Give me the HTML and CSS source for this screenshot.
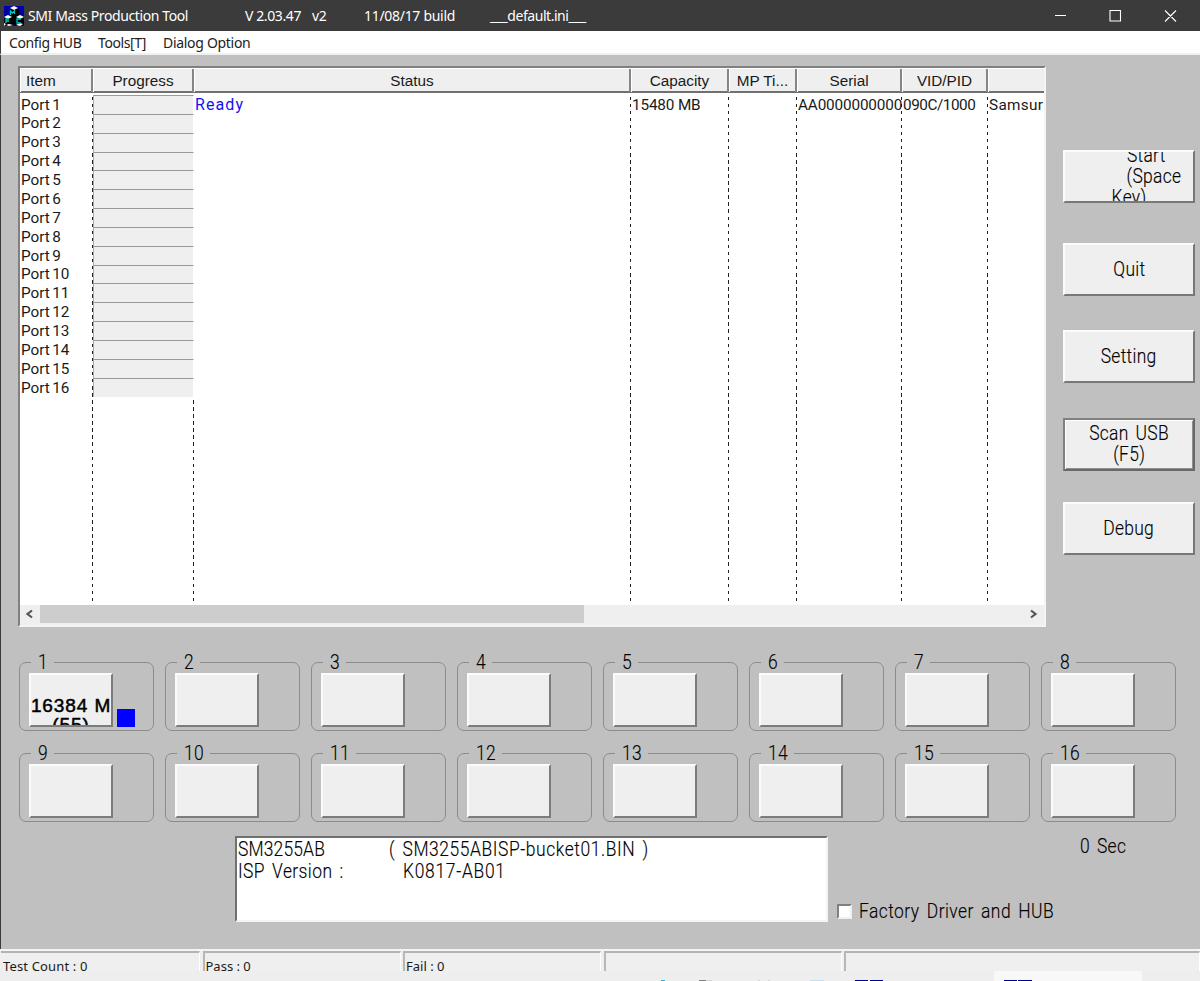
FILE: index.html
```html
<!DOCTYPE html>
<html lang="en">
<head>
<meta charset="utf-8">
<title>SMI Mass Production Tool</title>
<link rel="stylesheet" href="styles.css">
</head>
<body>
<div class="window">
  <header class="titlebar">
    <svg class="app-icon" width="20" height="20" viewBox="0 0 20 20">
      <path fill="#0000a8" d="M0 0h20v20H0z"/>
      <path fill="#000" d="M6 3l4-2 5 2v6l5 2v7l-4 2h-3l-3-2-3 2H4l-4-2v-6l6-3z"/>
      <path fill="#fff" d="M6 2l4-2 4 2-4 2zM0 11l4-2 4 2-4 2zM12 11l4-2 4 2-4 2zM2 19l3-1 4 1-4 1zM12 19l4-2 3 1-3 2zM0 17l2 1-2 2z"/>
      <path fill="none" stroke="#00c8c0" stroke-width="1.300" d="M6.500 9V5l2 2 2-2v3M5 13H2v4M2 15h3M17 13h-4v4h4"/>
    </svg>
    <span class="t-app">SMI Mass Production Tool</span>
    <span class="t-ver">V 2.03.47</span>
    <span class="t-rev">v2</span>
    <span class="t-build">11/08/17 build</span>
    <span class="t-ini">___default.ini___</span>
    <svg class="controls" width="122" height="14" viewBox="0 0 122 14" fill="none" stroke="#fff" stroke-width="1.1">
      <path d="M0 6.500h11M55 1.500h10.500v10.500h-10.500zM110 1.500l11 11M121 1.500l-11 11"/>
    </svg>
  </header>
  <nav class="menu"><span class="m1">Config HUB</span><span class="m2">Tools[T]</span><span class="m3">Dialog Option</span></nav>

  <main class="client">
    <div class="upper">
      <section class="list">
        <div class="head">
          <div class="left">Item</div><div>Progress</div><div>Status</div><div>Capacity</div><div>MP Ti...</div><div>Serial</div><div>VID/PID</div><div></div>
        </div>
        <div class="cols">
          <div class="col ports"><p>Port 1</p><p>Port 2</p><p>Port 3</p><p>Port 4</p><p>Port 5</p><p>Port 6</p><p>Port 7</p><p>Port 8</p><p>Port 9</p><p>Port 10</p><p>Port 11</p><p>Port 12</p><p>Port 13</p><p>Port 14</p><p>Port 15</p><p>Port 16</p></div>
          <div class="col bars"><i></i><i></i><i></i><i></i><i></i><i></i><i></i><i></i><i></i><i></i><i></i><i></i><i></i><i></i><i></i><i></i></div>
          <div class="col"><p class="ready">Ready</p></div>
          <div class="col"><p class="cap">15480 MB</p></div>
          <div class="col"></div>
          <div class="col"><p class="serial">AA0000000000</p></div>
          <div class="col"><p class="vid">090C/1000</p></div>
          <div class="col last"><p class="maker">Samsur</p></div>
        </div>
        <div class="scroll">
          <svg width="20" height="20" viewBox="0 0 20 20"><path d="M12 5.500L7.500 9l4.500 3.500" fill="none" stroke="#555" stroke-width="2.200"/></svg>
          <div class="track"><div class="thumb"></div></div>
          <svg width="20" height="20" viewBox="0 0 20 20"><path d="M7 5.500L11.500 9 7 12.500" fill="none" stroke="#555" stroke-width="2.200"/></svg>
        </div>
      </section>
      <aside class="side">
        <button class="btn start"><span class="gx s1">Start</span><span class="gx s2">(Space</span><span class="gx s3">Key)</span></button>
        <button class="btn"><span class="gx quit">Quit</span></button>
        <button class="btn"><span class="gx">Setting</span></button>
        <button class="btn focus"><span class="gx scan">Scan USB</span><span class="gx f5">(F5)</span></button>
        <button class="btn"><span class="gx debug">Debug</span></button>
      </aside>
    </div>

    <section class="slots">
      <fieldset><legend><span class="gx">1</span></legend><div class="face used"><b>16384 M</b><b class="sub">(55)</b></div><div class="lamp"></div></fieldset>
      <fieldset><legend><span class="gx">2</span></legend><div class="face"></div></fieldset>
      <fieldset><legend><span class="gx">3</span></legend><div class="face"></div></fieldset>
      <fieldset><legend><span class="gx">4</span></legend><div class="face"></div></fieldset>
      <fieldset><legend><span class="gx">5</span></legend><div class="face"></div></fieldset>
      <fieldset><legend><span class="gx">6</span></legend><div class="face"></div></fieldset>
      <fieldset><legend><span class="gx">7</span></legend><div class="face"></div></fieldset>
      <fieldset><legend><span class="gx">8</span></legend><div class="face"></div></fieldset>
      <fieldset><legend><span class="gx">9</span></legend><div class="face"></div></fieldset>
      <fieldset><legend class="two"><span class="gx">10</span></legend><div class="face"></div></fieldset>
      <fieldset><legend class="two"><span class="gx">11</span></legend><div class="face"></div></fieldset>
      <fieldset><legend class="two"><span class="gx">12</span></legend><div class="face"></div></fieldset>
      <fieldset><legend class="two"><span class="gx">13</span></legend><div class="face"></div></fieldset>
      <fieldset><legend class="two"><span class="gx">14</span></legend><div class="face"></div></fieldset>
      <fieldset><legend class="two"><span class="gx">15</span></legend><div class="face"></div></fieldset>
      <fieldset><legend class="two"><span class="gx">16</span></legend><div class="face"></div></fieldset>
    </section>

    <section class="lower">
      <div class="info">
        <div class="k"><span class="gx i1">SM3255AB</span></div><div><span class="gx i2">( SM3255ABISP-bucket01.BIN )</span></div>
        <div class="k"><span class="gx i3">ISP Version :</span></div><div class="indent"><span class="gx i4">K0817-AB01</span></div>
      </div>
      <div class="right">
        <div class="sec"><span class="gx">0 Sec</span></div>
        <label class="factory"><span class="box"></span><span class="gx fd">Factory Driver and HUB</span></label>
      </div>
    </section>
  </main>

  <footer class="status"><div>Test Count : 0</div><div>Pass : 0</div><div>Fail : 0</div><div></div><div></div></footer>
</div>
<div class="taskbar">
  <svg width="1200" height="10" viewBox="0 0 1200 10">
    <path fill="#f8f8f8" d="M994 0h148v10H994z"/>
    <path fill="#000090" d="M855 9h13v1h-13zM870 9h13v1h-13zM1004 9h13v1h-13zM1018 9h14v1h-14z"/>
    <path fill="#30b0e8" d="M661 9h4v1h-4z"/>
    <path fill="#808080" d="M699 9h7v1h-7z"/>
    <path fill="#c4dcf4" d="M810 9h14v1h-14z"/>
    <path fill="#d4d4d4" d="M706 9h6v1h-6zM758 9h2v1h-2zM768 9h2v1h-2z"/>
  </svg>
</div>
</body>
</html>
```
FILE: styles.css
```css
* { box-sizing: border-box; }
body { margin: 0; width: 1200px; height: 981px; overflow: hidden; background: #eee; font-family: "Liberation Sans", sans-serif; color: #1a1a1a; }
p { margin: 0; }
.window { height: 971px; display: flex; flex-direction: column; overflow: hidden; }

.titlebar { height: 31px; flex: none; display: flex; align-items: center; background: #3b3b3b; color: #fff; font: 14px/31px "Noto Sans", sans-serif; padding-left: 4px; white-space: pre; }
.app-icon { margin-right: 4px; }
.titlebar span { flex: none; letter-spacing: -0.4px; }
.t-app { width: 217px; }
.t-ver { width: 67px; }
.t-rev { width: 52px; }
.t-build { width: 126px; }
.titlebar .t-build { letter-spacing: -0.3px; }
.titlebar .t-ini { letter-spacing: -0.45px; }
.controls { margin-left: auto; margin-right: 23px; }

.menu { height: 24px; flex: none; display: flex; background: #fff; border-bottom: 2px solid #f0f0f0; border-left: 1px solid #3b3b3b; font: 14px/23px "Noto Sans", sans-serif; letter-spacing: -0.4px; padding-left: 8px; color: #222; }
.m1 { width: 89px; }
.m2 { width: 65px; }
.m3 { letter-spacing: -0.3px; }

.client { height: 894px; flex: none; background: #c0c0c0; border-left: 1px solid #3b3b3b; padding: 11px 5px 0 17px; }
.upper { display: flex; justify-content: space-between; height: 586px; }

.list { width: 1028px; height: 561px; border: 2px solid; border-color: #808080 #f4f4f4 #f4f4f4 #808080; background: #fff; display: flex; flex-direction: column; }
.head, .cols { display: grid; grid-template-columns: 73px 101px 437px 98px 68px 105px 86px 56px; }
.head { height: 25px; flex: none; background: #efefef; border-bottom: 2px solid #707070; border-top: 1px solid #fff; font-size: 15.300px; line-height: 23px; text-align: center; }
.head div { border-right: 2px solid #858585; border-left: 1px solid #fff; white-space: nowrap; }
.head div:last-child { border-right: 0; }
.head .left { text-align: left; padding-left: 5px; }
.cols { flex: 1; font: 15.300px/18.870px Roboto, sans-serif; }
.col { padding-top: 2.500px; white-space: nowrap; min-width: 0; padding-left: 1px; background: repeating-linear-gradient(to bottom, #fff 0, #fff 3.500px, #222 3.500px, #222 7.060px) right top / 1.500px 100% no-repeat; }
.last { background: none; overflow: hidden; }
.ports { padding-left: 1px; word-spacing: -1.500px; }
.bars { padding: 2px 0 0; display: flex; flex-direction: column; }
.bars i { height: 18.850px; flex: none; background: #efefef; border-top: 1px solid #999; border-left: 1px solid #aaa; border-right: 1px solid #fff; }
.ready { color: #1414f0; font-size: 16px; letter-spacing: 1.100px; }
.cap { letter-spacing: -0.150px; }
.serial { letter-spacing: -0.150px; }
.vid { letter-spacing: -0.450px; }
.maker { letter-spacing: .3px; }

.scroll { height: 20px; flex: none; display: flex; background: #efefef; }
.track { flex: 1; }
.thumb { width: 544px; height: 18px; background: #cdcdcd; }

.gx { display: inline-block; font: 300 21px/21px Roboto, sans-serif; transform: scaleX(.83); transform-origin: left center; white-space: pre; word-spacing: 3px; letter-spacing: .35px; color: #000; -webkit-text-stroke: .15px #000; }

.side { width: 132px; padding-top: 84px; }
.btn { display: flex; flex-direction: column; align-items: center; justify-content: center; width: 132px; height: 53px; margin: 0 0 40px; padding: 0 0 1px; overflow: hidden; background: #efefef; border: 2px solid; border-color: #fbfbfb #787878 #787878 #fbfbfb; border-radius: 0; }
.btn:nth-child(2) { margin-bottom: 34.300px; }
.btn:nth-child(3) { margin-bottom: 34.700px; }
.btn:nth-child(4) { margin-bottom: 31.500px; }
.btn .gx { transform-origin: center; flex: none; }
.focus { border-color: #808080 #686868 #686868 #808080; box-shadow: inset 1px 1px #fff, inset -1px -1px #909090; }
.start .s1 { margin-left: 35px; }
.start .s2 { margin-left: 49px; }
.start .s3 { margin-left: 0; }

.slots { display: grid; grid-template-columns: repeat(8, 135px); column-gap: 11.050px; row-gap: 12px; padding-left: 1px; }
fieldset { margin: 0; min-width: 0; width: 135px; height: 79px; border: 1px solid #8c8c8c; border-radius: 7px; display: flex; align-items: flex-end; padding: 0 0 3px 9px; }
legend { margin-left: 2px; width: 23px; height: 20px; padding: 0 0 0 7px; }
.two { width: 33px; }
.face { width: 84px; height: 54px; background: #efefef; border: 2px solid; border-color: #fbfbfb #7c7c7c #7c7c7c #fbfbfb; overflow: hidden; }
.used { padding-top: 21px; }
.used b { display: block; font: 500 19px/19px "Liberation Sans", sans-serif; letter-spacing: .9px; white-space: nowrap; color: #000; text-align: center; margin: 0 -2px; -webkit-text-stroke: .5px #000; }
.lamp { width: 18px; height: 18px; background: #00f; margin-left: 4px; }

.lower { display: flex; padding: 14px 0 0 217px; }
.info { width: 593px; height: 86px; border: 2px solid; border-color: #707070 #f4f4f4 #f4f4f4 #707070; background: #fff; display: grid; grid-template-columns: 151px 1fr; grid-auto-rows: 21.500px; align-content: start; padding: 1px 0 0 1px; }
.info div { white-space: nowrap; width: 0; }
.info .indent { padding-left: 14px; }
.i1 { letter-spacing: .2px; }
.i2 { letter-spacing: .7px; word-spacing: 3px; }
.i3 { letter-spacing: .5px; word-spacing: 3px; }
.i4 { letter-spacing: .85px; }
.right { width: 360px; padding-left: 9px; }
.sec { padding-left: 243px; height: 65px; }
.factory { display: flex; align-items: center; height: 21px; }
.fd { letter-spacing: .55px; }
.box { width: 15px; height: 15px; flex: none; background: #fff; border: 2px solid; border-color: #808080 #f0f0f0 #f0f0f0 #808080; margin-right: 7px; }

.status { height: 22px; flex: none; display: grid; grid-template-columns: 199px 198px 198px 238px 1fr; column-gap: 2.500px; border-top: 2px solid #f4f4f4; padding-left: 1px; background: #efefef; font: 13px/26px "Noto Sans", sans-serif; }
.status div { border-top: 2px solid #b4b4b4; border-left: 2px solid #b8b8b8; border-right: 1px solid #fff; height: 24px; white-space: nowrap; padding-left: 1px; }
.status div:first-child { border-left: 0; padding-left: 2px; letter-spacing: .15px; }
.taskbar { height: 10px; background: #eee; }
.taskbar svg { display: block; }
```
